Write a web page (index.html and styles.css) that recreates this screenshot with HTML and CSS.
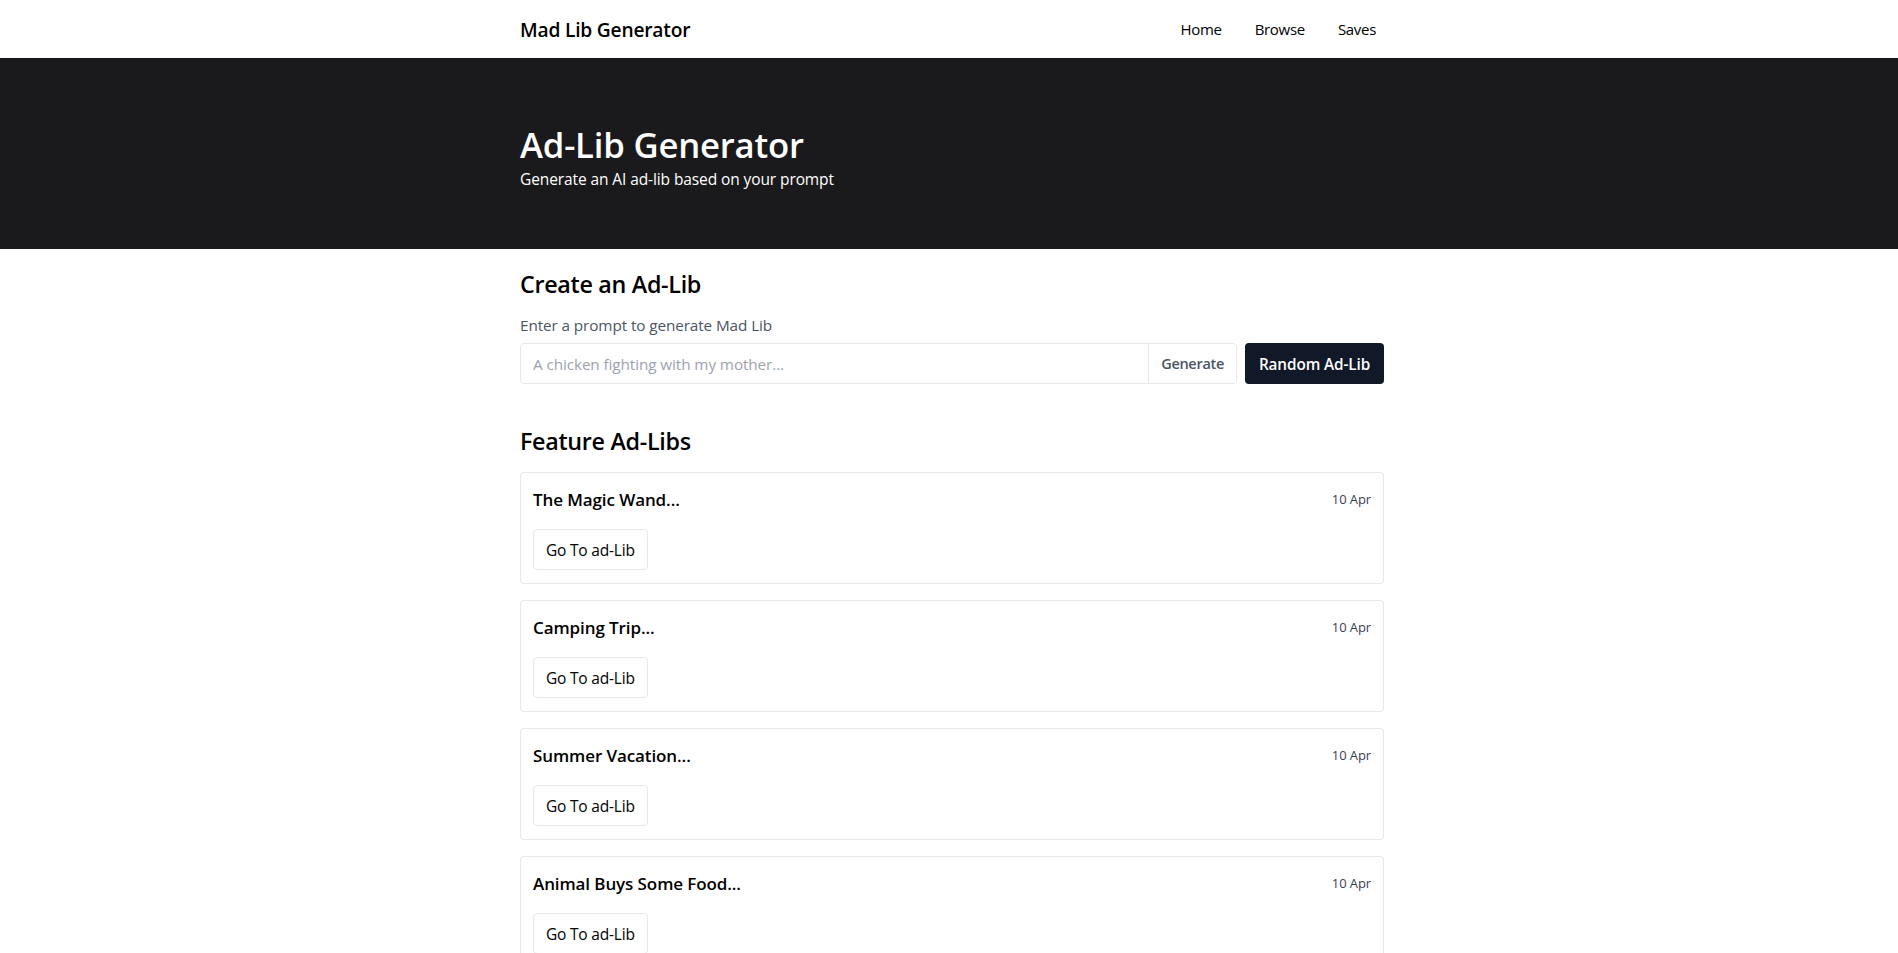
FILE: index.html
```html
<!DOCTYPE html>
<html lang="en">
<head>
<meta charset="utf-8">
<title>Mad Lib Generator</title>
<link rel="stylesheet" href="styles.css">
</head>
<body>
<header class="topbar">
  <div class="wrap topbar-inner">
    <div class="brand">Mad Lib Generator</div>
    <nav class="nav">
      <a href="#">Home</a>
      <a href="#">Browse</a>
      <a href="#">Saves</a>
    </nav>
  </div>
</header>
<section class="hero">
  <div class="wrap">
    <h1 class="hero-title">Ad-Lib Generator</h1>
    <p class="hero-sub">Generate an AI ad-lib based on your prompt</p>
  </div>
</section>
<main class="wrap main">
  <h2 class="section-title">Create an Ad-Lib</h2>
  <label class="prompt-label" for="prompt">Enter a prompt to generate Mad Lib</label>
  <div class="prompt-row">
    <div class="input-group">
      <input id="prompt" class="prompt-input" type="text" placeholder="A chicken fighting with my mother...">
      <button class="gen-btn">Generate</button>
    </div>
    <button class="random-btn">Random Ad-Lib</button>
  </div>

  <h2 class="section-title feature-title">Feature Ad-Libs</h2>
  <div class="cards">
    <div class="card">
      <div class="card-head"><span class="card-title">The Magic Wand...</span><span class="card-date">10 Apr</span></div>
      <button class="go-btn">Go To ad-Lib</button>
    </div>
    <div class="card">
      <div class="card-head"><span class="card-title">Camping Trip...</span><span class="card-date">10 Apr</span></div>
      <button class="go-btn">Go To ad-Lib</button>
    </div>
    <div class="card">
      <div class="card-head"><span class="card-title">Summer Vacation...</span><span class="card-date">10 Apr</span></div>
      <button class="go-btn">Go To ad-Lib</button>
    </div>
    <div class="card">
      <div class="card-head"><span class="card-title">Animal Buys Some Food...</span><span class="card-date">10 Apr</span></div>
      <button class="go-btn">Go To ad-Lib</button>
    </div>
  </div>
</main>
</body>
</html>
```

FILE: styles.css
```css
* { box-sizing: border-box; }
html, body { margin: 0; padding: 0; }
body {
  font-family: "Open Sans", "Noto Sans", sans-serif;
  color: #111;
  background: #fff;
}
.wrap {
  width: 864px;
  margin-left: calc(50% - 429px);
}
.topbar {
  height: 58px;
  background: #fff;
}
.topbar-inner {
  height: 58px;
  display: flex;
  align-items: center;
  justify-content: space-between;
}
.brand {
  font-size: 19.2px;
  font-weight: 600;
  letter-spacing: -0.2px;
  color: #000;
}
.nav {
  display: flex;
  gap: 33px;
  padding-right: 8px;
}
.nav a {
  font-size: 15px;
  color: #000;
  text-decoration: none;
  letter-spacing: -0.3px;
}
.hero {
  background: #1a1a1c;
  color: #fff;
  height: 191px;
  padding-top: 63px;
}
.hero-title {
  margin: 0;
  font-size: 34.7px;
  font-weight: 600;
  line-height: 48px;
  letter-spacing: -0.2px;
}
.hero-sub {
  margin: 0;
  font-size: 15.5px;
  line-height: 20px;
  letter-spacing: -0.1px;
}
.main {
  padding-top: 20px;
  display: flex;
  flex-direction: column;
}
.section-title {
  margin: 0;
  font-size: 23.3px;
  font-weight: 600;
  line-height: 30px;
  letter-spacing: -0.3px;
  color: #000;
}
.prompt-label {
  margin-top: 16px;
  font-size: 15.3px;
  line-height: 20px;
  color: #4b5563;
  letter-spacing: -0.1px;
}
.prompt-row {
  margin-top: 8px;
  display: flex;
  gap: 8px;
  height: 41px;
}
.input-group {
  flex: 1;
  display: flex;
  border: 1px solid #e5e7eb;
  border-radius: 4px;
  overflow: hidden;
}
.prompt-input {
  flex: 1;
  border: 0;
  outline: none;
  padding: 0 12px;
  font-family: inherit;
  font-size: 15.3px;
  color: #111;
  letter-spacing: -0.1px;
}
.prompt-input::placeholder { color: #9ca3af; }
.gen-btn {
  border: 0;
  border-left: 1px solid #e5e7eb;
  background: #fff;
  padding: 0 12px;
  font-family: inherit;
  font-size: 14.5px;
  font-weight: 600;
  color: #4b5563;
  letter-spacing: -0.3px;
}
.random-btn {
  width: 139px;
  border: 0;
  border-radius: 4px;
  background: #111827;
  color: #fff;
  font-family: inherit;
  font-size: 15.3px;
  font-weight: 600;
  letter-spacing: -0.1px;
}
.feature-title { margin-top: 42px; }
.cards {
  margin-top: 16px;
  display: flex;
  flex-direction: column;
  gap: 16px;
}
.card {
  border: 1px solid #e5e7eb;
  border-radius: 4px;
  padding: 12px;
  height: 112px;
  display: flex;
  flex-direction: column;
  align-items: flex-start;
  gap: 16px;
}
.card-head {
  align-self: stretch;
  display: flex;
  justify-content: space-between;
  align-items: center;
  height: 28px;
}
.card-title {
  font-size: 17px;
  font-weight: 600;
  color: #000;
  letter-spacing: -0.1px;
}
.card-date {
  font-size: 13px;
  font-weight: 500;
  color: #374151;
  letter-spacing: -0.1px;
}
.go-btn {
  height: 41px;
  padding: 0 12px;
  border: 1px solid #e5e7eb;
  border-radius: 4px;
  background: #fff;
  font-family: inherit;
  font-size: 15.5px;
  color: #000;
  letter-spacing: -0.2px;
}
```
